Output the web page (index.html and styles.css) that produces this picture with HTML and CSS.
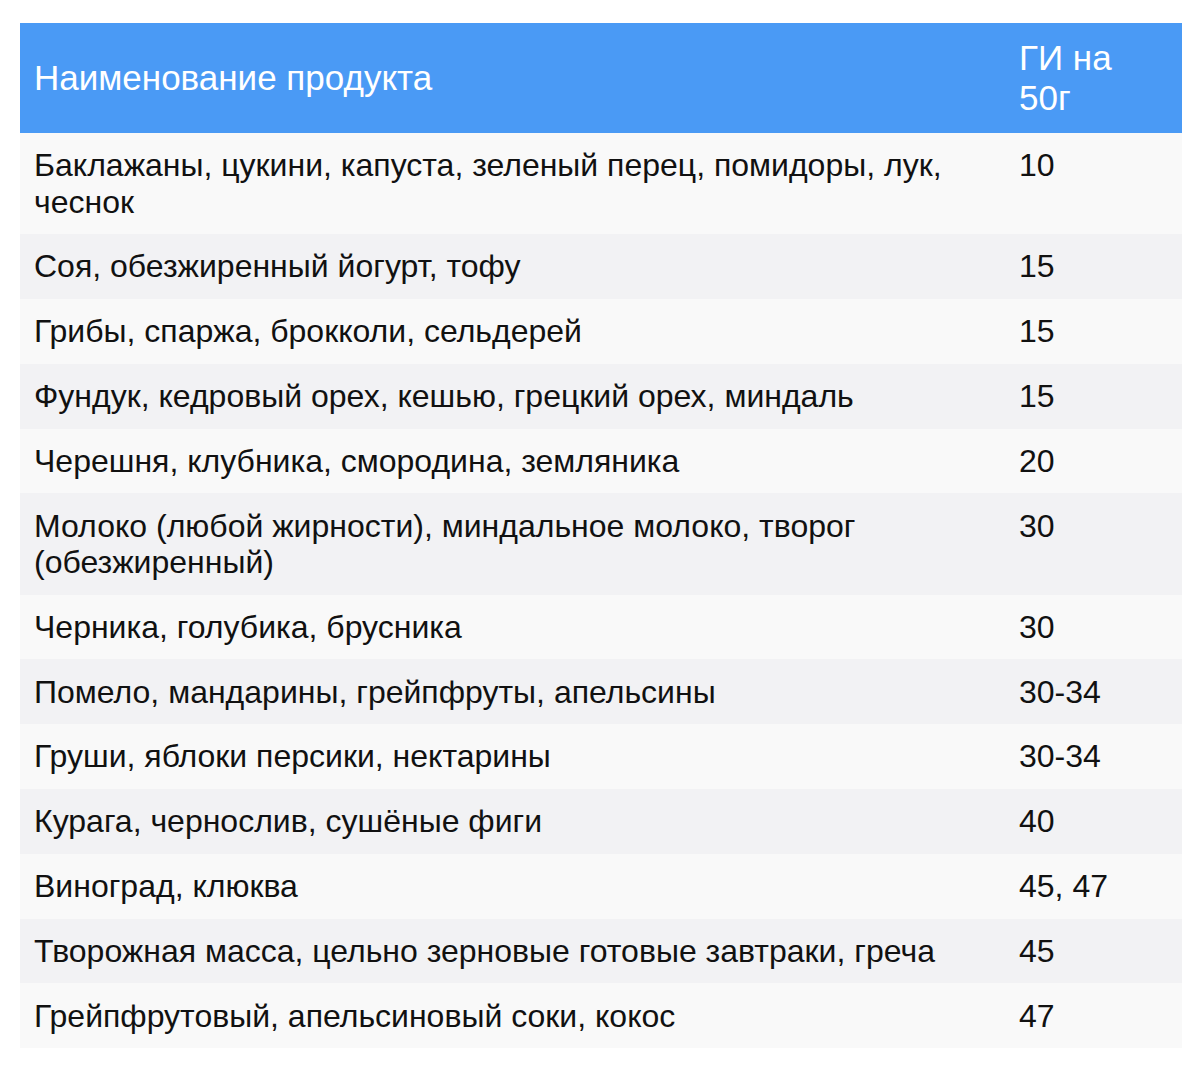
FILE: index.html
```html
<!DOCTYPE html>
<html lang="ru">
<head>
<meta charset="utf-8">
<title>Гликемический индекс</title>
<link rel="stylesheet" href="styles.css">
</head>
<body>
<div class="wrap">
<table class="gi">
  <colgroup><col class="c-name"><col class="c-val"></colgroup>
  <thead>
    <tr><th>Наименование продукта</th><th class="th-val">ГИ на 50г</th></tr>
  </thead>
  <tbody>
    <tr><td>Баклажаны, цукини, капуста, зеленый перец, помидоры, лук, чеснок</td><td>10</td></tr>
    <tr><td>Соя, обезжиренный йогурт, тофу</td><td>15</td></tr>
    <tr><td>Грибы, спаржа, брокколи, сельдерей</td><td>15</td></tr>
    <tr><td>Фундук, кедровый орех, кешью, грецкий орех, миндаль</td><td>15</td></tr>
    <tr><td>Черешня, клубника, смородина, земляника</td><td>20</td></tr>
    <tr><td>Молоко (любой жирности), миндальное молоко, творог (обезжиренный)</td><td>30</td></tr>
    <tr><td>Черника, голубика, брусника</td><td>30</td></tr>
    <tr><td>Помело, мандарины, грейпфруты, апельсины</td><td>30-34</td></tr>
    <tr><td>Груши, яблоки персики, нектарины</td><td>30-34</td></tr>
    <tr><td>Курага, чернослив, сушёные фиги</td><td>40</td></tr>
    <tr><td>Виноград, клюква</td><td>45, 47</td></tr>
    <tr><td>Творожная масса, цельно зерновые готовые завтраки, греча</td><td>45</td></tr>
    <tr><td>Грейпфрутовый, апельсиновый соки, кокос</td><td>47</td></tr>
  </tbody>
</table>
</div>
</body>
</html>
```
FILE: styles.css
```css
html, body {
  margin: 0;
  padding: 0;
  background: #ffffff;
}
.wrap {
  padding: 23px 18px 0 20px;
}
.gi {
  width: 1162px;
  border-collapse: collapse;
  table-layout: fixed;
  font-family: "Liberation Sans", Arial, sans-serif;
  font-size: 32px;
  color: #111111;
}
.c-name { width: 985px; }
.c-val { width: 177px; }
.gi th {
  background: #4a9af5;
  color: #ffffff;
  font-weight: normal;
  text-align: left;
  vertical-align: middle;
  font-size: 35px;
  line-height: 40px;
  padding: 15px 14px;
}
.gi th.th-val {
  padding-right: 40px;
}
.gi td {
  vertical-align: top;
  line-height: 36.5px;
  padding: 14.15px 14px;
}
.gi tbody tr:nth-child(odd) td { background: #f9f9f9; }
.gi tbody tr:nth-child(even) td { background: #f2f2f4; }
```
